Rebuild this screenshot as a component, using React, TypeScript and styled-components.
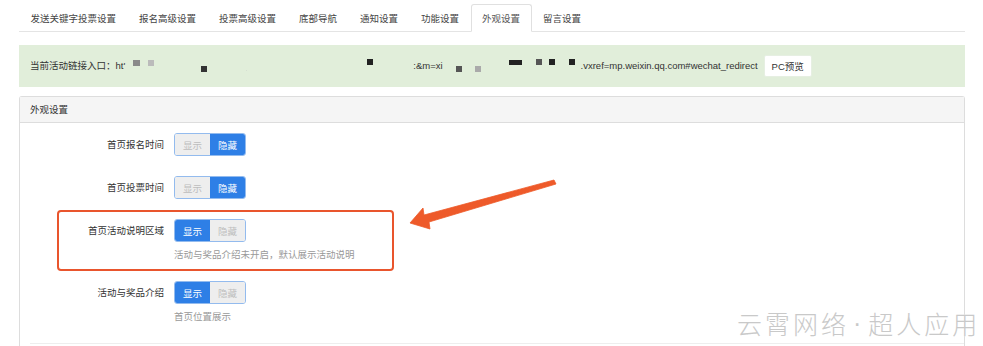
import React from "react";
import styled, { createGlobalStyle } from "styled-components";

const Global = createGlobalStyle`
  html, body { margin: 0; padding: 0; background: #fff; }
  body { font-family: "Liberation Sans", "Noto Sans CJK SC", sans-serif; font-size: 9.5px; color: #333; }
  * { box-sizing: border-box; }
`;

const Page = styled.div`
  position: relative;
  width: 983px;
  height: 346px;
  overflow: hidden;
  padding: 4px 18px 0 19px;
`;

const TabBar = styled.div`
  display: flex;
  height: 28px;
  border-bottom: 1px solid #e4e4e4;
`;

const Tab = styled.div<{ $active?: boolean }>`
  height: 28px;
  padding: 0 10.5px;
  line-height: 27px;
  font-size: 9.5px;
  color: ${(p) => (p.$active ? "#555" : "#444")};
  background: ${(p) => (p.$active ? "#fff" : "transparent")};
  border: 1px solid ${(p) => (p.$active ? "#e0e0e0" : "transparent")};
  border-bottom-color: ${(p) => (p.$active ? "#fff" : "transparent")};
  border-radius: 3px 3px 0 0;
  white-space: nowrap;
`;

const Alert = styled.div`
  margin-top: 13px;
  height: 42px;
  background: #e1eeda;
  display: flex;
  align-items: center;
  padding-left: 11px;
  white-space: nowrap;
`;

const UrlText = styled.span<{ $ml?: number }>`
  margin-left: ${(p) => p.$ml ?? 0}px;
  line-height: 12px;
  color: #333;
`;

const Mask = styled.span<{ $w: number; $h: number; $c: string; $ml: number; $dy: number }>`
  display: block;
  flex: none;
  width: ${(p) => p.$w}px;
  height: ${(p) => p.$h}px;
  background: ${(p) => p.$c};
  margin-left: ${(p) => p.$ml}px;
  transform: translateY(${(p) => p.$dy}px);
`;

const PreviewButton = styled.div`
  margin-left: 6px;
  width: 48px;
  height: 22px;
  background: #fff;
  border: 1px solid #e6efe2;
  border-radius: 2px;
  display: flex;
  align-items: center;
  justify-content: center;
  color: #333;
`;

const Panel = styled.div`
  margin-top: 9px;
  border: 1px solid #ddd;
  border-bottom: none;
  border-radius: 3px 3px 0 0;
  height: 260px;
`;

const PanelHeader = styled.div`
  height: 26px;
  background: #f5f5f5;
  border-bottom: 1px solid #ddd;
  padding-left: 10px;
  line-height: 26px;
  color: #333;
`;

const PanelBody = styled.div`
  padding-top: 10px;
`;

const FormGroup = styled.div<{ $highlight?: boolean }>`
  position: relative;
  display: grid;
  grid-template-columns: 144px auto;
  column-gap: 10px;
  margin-bottom: 20px;
  &::before {
    content: "";
    display: ${(p) => (p.$highlight ? "block" : "none")};
    position: absolute;
    left: 37px;
    top: -9px;
    width: 333px;
    bottom: -10px;
    border: 2px solid #e9552d;
    border-radius: 4px;
    pointer-events: none;
  }
`;

const Label = styled.div`
  text-align: right;
  line-height: 23px;
  color: #333;
`;

const Controls = styled.div`
  display: flex;
  flex-direction: column;
  align-items: flex-start;
`;

const Toggle = styled.div`
  display: flex;
  height: 23px;
  border: 1px solid #93bbee;
  border-radius: 3px;
  overflow: hidden;
`;

const ToggleButton = styled.div<{ $on?: boolean }>`
  width: 35px;
  display: flex;
  align-items: center;
  justify-content: center;
  background: ${(p) => (p.$on ? "#2e7fe6" : "#eeeeee")};
  color: ${(p) => (p.$on ? "#fff" : "#bdbdbd")};
`;

const Help = styled.div`
  margin-top: 7px;
  line-height: 12px;
  color: #999;
`;

const Divider = styled.div`
  margin: 0 0 0 10px;
  border-top: 1px solid #eee;
`;

const Arrow = styled.svg`
  position: absolute;
  left: 0;
  top: 0;
  pointer-events: none;
`;

const Watermark = styled.div`
  position: absolute;
  left: 737px;
  top: 308px;
  display: flex;
  align-items: center;
  font-family: "Noto Sans CJK SC", sans-serif;
  font-weight: 300;
  font-size: 25px;
  line-height: 30px;
  color: #c9c9c9;
  white-space: nowrap;
  text-shadow: 0 0 1px #fff;
`;

const WatermarkWord = styled.span`
  letter-spacing: 3px;
`;

const WatermarkDot = styled.span`
  flex: none;
  font-family: "Liberation Sans", sans-serif;
  margin: 0 7px 0 4px;
`;

const tabs = ["发送关键字投票设置", "报名高级设置", "投票高级设置", "底部导航", "通知设置", "功能设置", "外观设置", "留言设置"];

type Row = { label: string; show: boolean; help?: string; highlight?: boolean };
const rows: Row[] = [
  { label: "首页报名时间", show: false },
  { label: "首页投票时间", show: false },
  { label: "首页活动说明区域", show: true, help: "活动与奖品介绍未开启，默认展示活动说明", highlight: true },
  { label: "活动与奖品介绍", show: true, help: "首页位置展示" },
];

export default function App() {
  return (
    <>
      <Global />
      <Page>
        <TabBar>
          {tabs.map((t) => (
            <Tab key={t} $active={t === "外观设置"}>{t}</Tab>
          ))}
        </TabBar>
        <Alert>
          <UrlText>当前活动链接入口：ht'</UrlText>
          <Mask $w={7} $h={6} $c="#8a8a8a" $ml={8} $dy={-3} />
          <Mask $w={6} $h={6} $c="#bbbbbb" $ml={8} $dy={-3} />
          <Mask $w={6} $h={6} $c="#333" $ml={47} $dy={3} />
          <Mask $w={1} $h={1} $c="#d6dfd2" $ml={39} $dy={4} />
          <Mask $w={6} $h={6} $c="#222" $ml={120} $dy={-4} />
          <UrlText $ml={40}>:&amp;m=xi</UrlText>
          <Mask $w={6} $h={6} $c="#555" $ml={13} $dy={3} />
          <Mask $w={6} $h={6} $c="#aaa" $ml={13} $dy={3} />
          <Mask $w={13} $h={5} $c="#222" $ml={28} $dy={-4} />
          <Mask $w={6} $h={6} $c="#555" $ml={14} $dy={-4} />
          <Mask $w={6} $h={6} $c="#222" $ml={7} $dy={-4} />
          <Mask $w={6} $h={6} $c="#222" $ml={14} $dy={-4} />
          <UrlText $ml={6}>.vxref=mp.weixin.qq.com#wechat_redirect</UrlText>
          <PreviewButton>PC预览</PreviewButton>
        </Alert>
        <Panel>
          <PanelHeader>外观设置</PanelHeader>
          <PanelBody>
            {rows.map((r) => (
              <FormGroup key={r.label} $highlight={r.highlight}>
                <Label>{r.label}</Label>
                <Controls>
                  <Toggle>
                    <ToggleButton $on={r.show}>显示</ToggleButton>
                    <ToggleButton $on={!r.show}>隐藏</ToggleButton>
                  </Toggle>
                  {r.help && <Help>{r.help}</Help>}
                </Controls>
              </FormGroup>
            ))}
            <Divider />
          </PanelBody>
        </Panel>
        <Arrow width="983" height="346" viewBox="0 0 983 346">
          <polygon
            points="410,223 423,208 424,215 554,180 556,184 429,222 430,229"
            fill="#ee5a2a"
            strokeLinejoin="round"
            stroke="#ee5a2a"
            strokeWidth="0.8"
          />
        </Arrow>
        <Watermark>
          <WatermarkWord>云霄网络</WatermarkWord>
          <WatermarkDot>·</WatermarkDot>
          <WatermarkWord>超人应用</WatermarkWord>
        </Watermark>
      </Page>
    </>
  );
}
